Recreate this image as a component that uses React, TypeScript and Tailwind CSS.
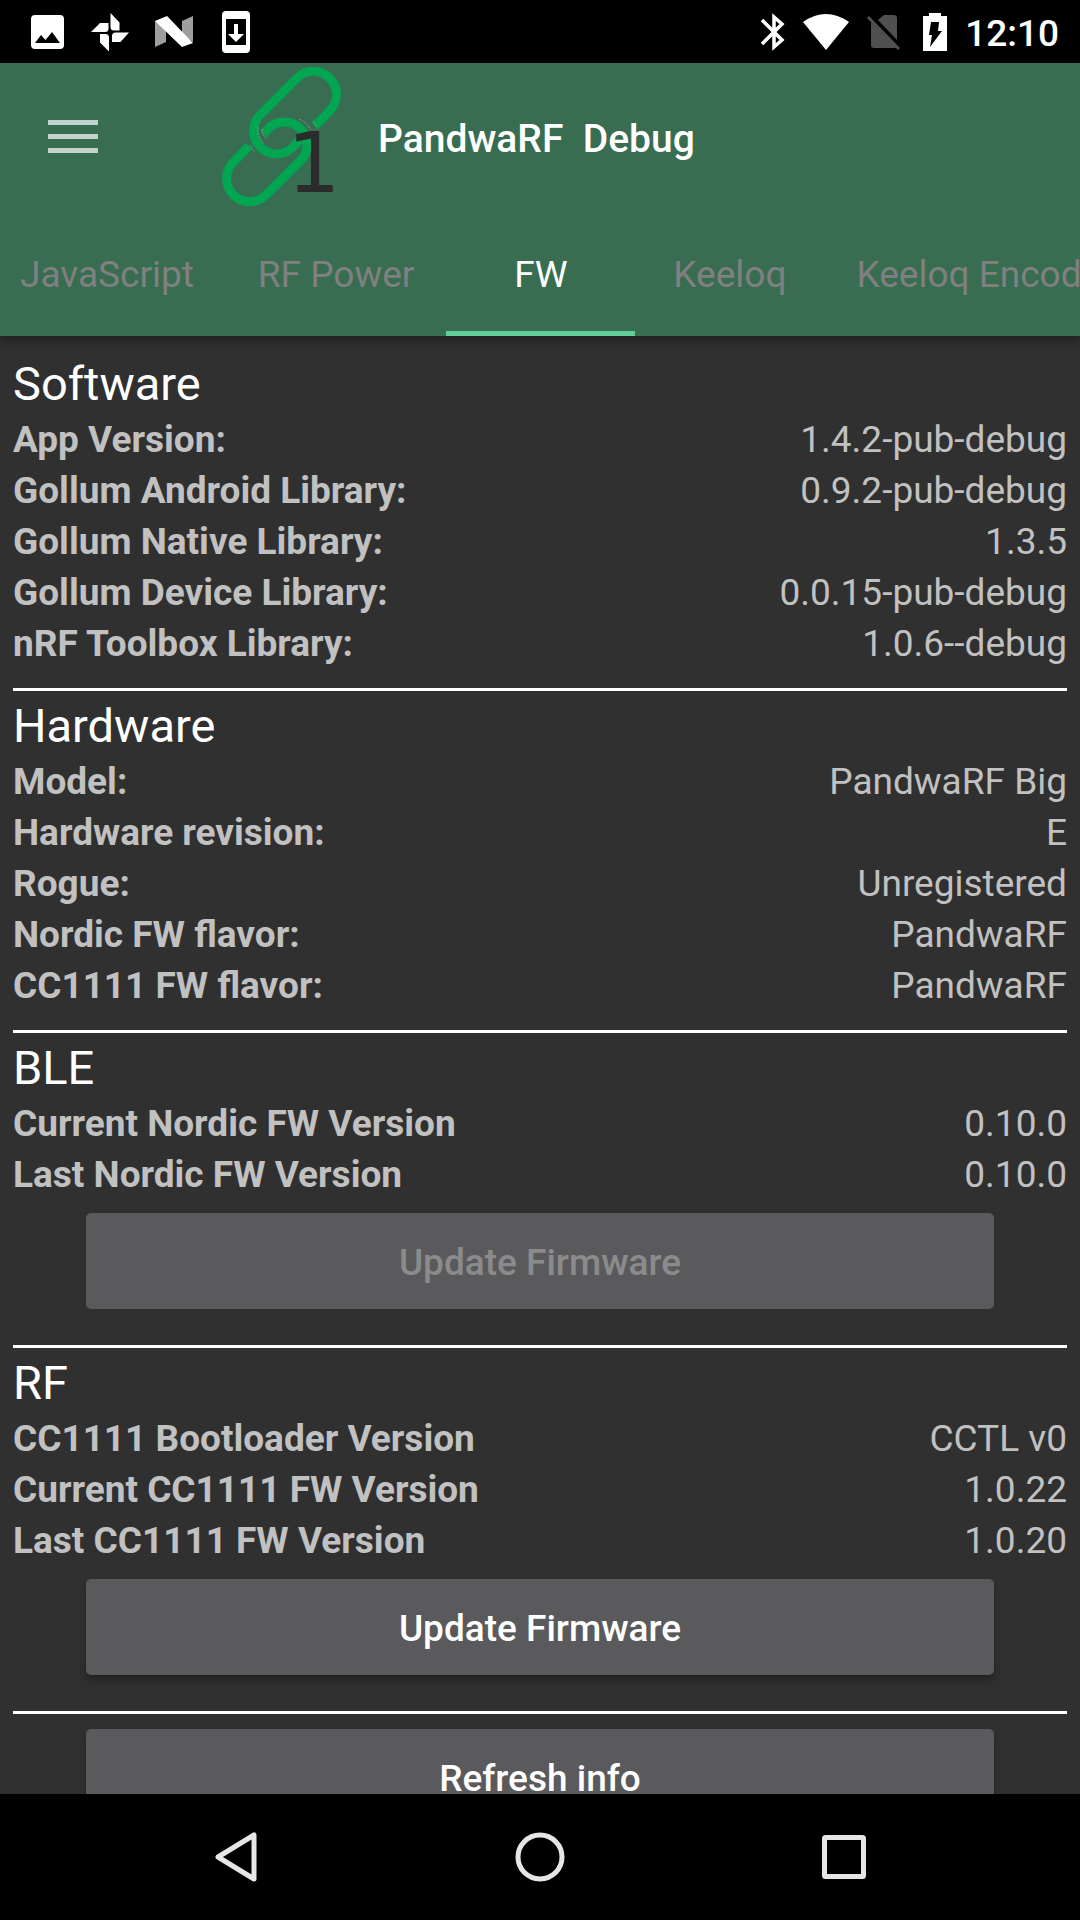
import React from "react";

type Row = { label: string; value: string };

const software: Row[] = [
  { label: "App Version:", value: "1.4.2-pub-debug" },
  { label: "Gollum Android Library:", value: "0.9.2-pub-debug" },
  { label: "Gollum Native Library:", value: "1.3.5" },
  { label: "Gollum Device Library:", value: "0.0.15-pub-debug" },
  { label: "nRF Toolbox Library:", value: "1.0.6--debug" },
];
const hardware: Row[] = [
  { label: "Model:", value: "PandwaRF Big" },
  { label: "Hardware revision:", value: "E" },
  { label: "Rogue:", value: "Unregistered" },
  { label: "Nordic FW flavor:", value: "PandwaRF" },
  { label: "CC1111 FW flavor:", value: "PandwaRF" },
];
const ble: Row[] = [
  { label: "Current Nordic FW Version", value: "0.10.0" },
  { label: "Last Nordic FW Version", value: "0.10.0" },
];
const rf: Row[] = [
  { label: "CC1111 Bootloader Version", value: "CCTL v0" },
  { label: "Current CC1111 FW Version", value: "1.0.22" },
  { label: "Last CC1111 FW Version", value: "1.0.20" },
];
const tabs = ["JavaScript", "RF Power", "FW", "Keeloq", "Keeloq Encoder"];

function StatusBar() {
  return (
    <div className="flex h-[63px] shrink-0 items-center justify-between bg-black pr-[21px] pl-[30px] text-white">
      <div className="flex items-center gap-[25px]">
        <svg className="h-9 w-[35px]" viewBox="0 0 35 36" fill="currentColor" aria-label="Picture">
          <path fillRule="evenodd" d="M5 1h25a4 4 0 0 1 4 4v26a4 4 0 0 1-4 4H5a4 4 0 0 1-4-4V5a4 4 0 0 1 4-4ZM5 29h25L22 18l-6.500 8L11 21Z" />
        </svg>
        <svg className="h-10 w-10" viewBox="0 0 40 40" fill="currentColor" aria-label="Photos">
          <path d="M20.500 1l9 9.500v8h-5.500a3.500 3.500 0 0 1-3.500-3.500ZM39 20.500l-8.500 9.500H22v-6a3.500 3.500 0 0 1 3.500-3.500ZM19 39.500l-9-9V22h5.500a3.500 3.500 0 0 1 3.500 3.500ZM1 20l9-9h8.500v5.500A3.500 3.500 0 0 1 15 20Z" />
        </svg>
        <svg className="h-8 w-[38px]" viewBox="0 0 38 32" fill="currentColor" aria-label="Android N">
          <path fill="#9e9e9e" d="M0 5v26l11-5V13ZM38 0v26L27 19V5Z" />
          <path d="M0 5L12 0l26 27-11 4Z" />
        </svg>
        <svg className="ml-1 h-[42px] w-7" viewBox="0 0 28 42" fill="currentColor" aria-label="System update">
          <path fillRule="evenodd" d="M4 0h20a4 4 0 0 1 4 4v34a4 4 0 0 1-4 4H4a4 4 0 0 1-4-4V4a4 4 0 0 1 4-4ZM4 8v26h20V8ZM12 13h4v10h6l-8 8-8-8h6Z" />
        </svg>
      </div>
      <div className="flex items-center gap-[18px]">
        <svg className="h-[38px] w-6" viewBox="0 0 24 38" fill="none" stroke="currentColor" strokeWidth="3.500" aria-label="Bluetooth">
          <path d="M1 7l20 20-8 7V4l8 7L1 31" />
        </svg>
        <svg className="h-9 w-[46px]" viewBox="0 0 46 36" fill="currentColor" aria-label="Wi-Fi">
          <path d="M0 8Q23-8 46 8L23 36Z" />
        </svg>
        <svg className="h-9 w-[34px]" viewBox="0 0 34 36" fill="#505050" aria-label="No SIM">
          <path d="M11 6l6-5h10a3 3 0 0 1 3 3v22ZM4 8l26 26H7a3 3 0 0 1-3-3Z" />
          <path d="M2 2l31 32-2 2L0 4Z" />
        </svg>
        <svg className="ml-1 h-[38px] w-6" viewBox="0 0 24 38" fill="currentColor" aria-label="Battery charging">
          <path fillRule="evenodd" d="M6 0h12v3h6v35H0V3h6ZM8 9h8l-1 9h4L7 34l2-12H6Z" />
        </svg>
        <span className="pt-1 text-[37px] leading-none font-medium">12:10</span>
      </div>
    </div>
  );
}

function LinkLogo() {
  return (
    <svg className="h-[147px] w-[130px]" viewBox="218 63 130 147" fill="none" aria-label="One device connected">
      <g stroke="#00a651" strokeWidth="9">
        <path d="M315 126L329.500 111A23 23 0 0 0 297 78L260 115A23 23 0 0 0 292 148L300 140" />
        <path d="M249 146L233.500 162A23 23 0 0 0 266 195L303 158A23 23 0 0 0 271 126L263.500 134" />
      </g>
      <g stroke="#8fa98f" strokeWidth="1" strokeDasharray="2 1" opacity="0.8">
        <path d="M258 127Q257 136 264 144M262 129Q262 135 267 139M250 145l4 6M299 119Q306 122 311 130M313 121l4 6M297 136l4 4" />
      </g>
      <text x="287" y="192" fontSize="84" fill="#2b2b2b" fontFamily="DejaVu Sans">1</text>
    </svg>
  );
}

function Section({ title, rows, children }: { title: string; rows: Row[]; children?: React.ReactNode }) {
  return (
    <section className="border-b-[3px] border-white pt-1">
      <h2 className="text-[47px] leading-[61px] text-white">{title}</h2>
      <dl>
        {rows.map((r) => (
          <div key={r.label} className="flex justify-between text-[37px] leading-[51px]">
            <dt className="font-bold">{r.label}</dt>
            <dd>{r.value}</dd>
          </div>
        ))}
      </dl>
      {children ?? <div className="h-[19px]" />}
    </section>
  );
}

function ActionButton({ children, disabled }: { children: string; disabled?: boolean }) {
  return (
    <button
      type="button"
      disabled={disabled}
      className="block h-24 w-full rounded-[5px] bg-[#5a5a5c] pt-[3px] text-[37px] font-medium text-white shadow-[0_5px_6px_rgba(0,0,0,0.3)] disabled:text-[#8b8b8c] disabled:shadow-none"
    >
      {children}
    </button>
  );
}

export default function App() {
  return (
    <div className="flex h-screen flex-col overflow-hidden bg-[#303030] font-[Roboto,sans-serif] text-[#c1c1c1]">
      <StatusBar />
      <header className="relative shrink-0 bg-[#386d52] shadow-[0_4px_10px_rgba(0,0,0,0.4)]">
        <div className="flex h-[147px] items-center">
          <button type="button" aria-label="Open menu" className="ml-12 flex w-[50px] flex-col gap-[9px]">
            <span className="h-[5px] w-full bg-[#c3d3cb]" />
            <span className="h-[5px] w-full bg-[#c3d3cb]" />
            <span className="h-[5px] w-full bg-[#c3d3cb]" />
          </button>
          <div className="ml-[120px]">
            <LinkLogo />
          </div>
          <h1 className="ml-[30px] pt-[5px] text-[39px] font-medium whitespace-pre text-white">PandwaRF  Debug</h1>
        </div>
        <nav className="overflow-hidden">
          <div role="tablist" className="-ml-3 flex h-[126px]">
            {tabs.map((t) => (
              <button
                key={t}
                type="button"
                role="tab"
                aria-selected={t === "FW"}
                className="min-w-[189px] shrink-0 border-b-[5px] border-transparent px-8 pt-2 text-[37px] whitespace-nowrap text-[#808080] aria-selected:border-b-[#62cf9b] aria-selected:text-white"
              >
                {t}
              </button>
            ))}
          </div>
        </nav>
      </header>
      <main className="min-h-0 flex-1 overflow-y-auto px-[13px] pt-[13px] [scrollbar-width:none]">
        <Section title="Software" rows={software} />
        <Section title="Hardware" rows={hardware} />
        <Section title="BLE" rows={ble}>
          <div className="px-[73px] pt-[13px] pb-9">
            <ActionButton disabled>Update Firmware</ActionButton>
          </div>
        </Section>
        <Section title="RF" rows={rf}>
          <div className="px-[73px] pt-[13px] pb-9">
            <ActionButton>Update Firmware</ActionButton>
          </div>
        </Section>
        <div className="px-[73px] py-[15px]">
          <ActionButton>Refresh info</ActionButton>
        </div>
      </main>
      <footer className="flex h-[126px] shrink-0 items-center justify-center gap-[252px] bg-black">
        <button type="button" aria-label="Back">
          <svg className="h-[52px] w-[52px]" viewBox="0 0 52 52" fill="none" stroke="#e6e6e6" strokeWidth="5" strokeLinejoin="round">
            <path d="M44 4v44L8 26Z" />
          </svg>
        </button>
        <button type="button" aria-label="Home">
          <svg className="h-[52px] w-[52px]" viewBox="0 0 52 52" fill="none" stroke="#e6e6e6" strokeWidth="5">
            <circle cx="26" cy="26" r="22" />
          </svg>
        </button>
        <button type="button" aria-label="Recent apps">
          <svg className="h-[52px] w-[52px]" viewBox="0 0 52 52" fill="none" stroke="#e6e6e6" strokeWidth="5">
            <rect x="6.500" y="6.500" width="39" height="39" rx="1" />
          </svg>
        </button>
      </footer>
    </div>
  );
}
